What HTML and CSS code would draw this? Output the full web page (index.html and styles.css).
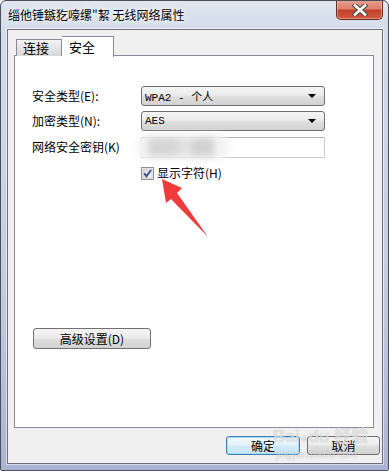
FILE: index.html
```html
<!DOCTYPE html>
<html lang="zh-CN">
  <head>
    <meta charset="utf-8">
    <title>无线网络属性</title>
    <link rel="stylesheet" href="styles.css">
  </head>
  <body>
    <div class="window">

      <div class="titlebar">
        <span class="title">缁他锤鏃犵嚎缧"絜 无线网络属性</span>
        <button class="close" aria-label="关闭">
          <svg width="16" height="12" viewBox="0 0 16 12">
            <path d="M3 1.5 L13 10.5 M13 1.5 L3 10.5" stroke="#4a4a4a" stroke-width="4.6" stroke-linecap="square"/>
            <path d="M3 1.5 L13 10.5 M13 1.5 L3 10.5" stroke="#fff" stroke-width="2.6" stroke-linecap="square"/>
          </svg>
        </button>
      </div>

      <div class="client">

        <div class="tabs">
          <div class="tab">连接</div>
          <div class="tab active">安全</div>
        </div>

        <div class="panel">
          <div class="fields">
            <label>安全类型(E):</label>
            <div class="combo"><span>WPA2 - 个人</span><i class="caret"></i></div>

            <label>加密类型(N):</label>
            <div class="combo"><span>AES</span><i class="caret"></i></div>

            <label>网络安全密钥(K)</label>
            <div class="textbox"></div>
          </div>

          <!-- key is hidden behind a blur in the original picture -->
          <div class="key-blur">
            <span class="b1"></span><span class="b2"></span><span class="b3"></span>
          </div>

          <div class="check-row">
            <svg class="checkbox" width="13" height="13" viewBox="0 0 13 13">
              <defs>
                <linearGradient id="cbg" x1="0" y1="0" x2="1" y2="1">
                  <stop offset="0" stop-color="#d6d6d6"/>
                  <stop offset="1" stop-color="#fbfbfb"/>
                </linearGradient>
              </defs>
              <rect x="0.5" y="0.5" width="12" height="12" fill="#f4f4f4" stroke="#8f8f8f"/>
              <rect x="2" y="2" width="9" height="9" fill="url(#cbg)" stroke="#b8b8b8" stroke-width="0.6"/>
              <path d="M3.2 6.4 L5.4 9.4 L10 3" fill="none" stroke="#3b4f8f" stroke-width="1.8"/>
            </svg>
            <span>显示字符(H)</span>
          </div>

          <button class="btn adv">高级设置(D)</button>
        </div>

        <div class="actions">
          <button class="btn default">确定</button>
          <button class="btn">取消</button>
        </div>

      </div>

      <div class="watermark">
        <div class="wm-main">Bai<span class="paw">●</span>du 经验</div>
        <div class="wm-url">jingyan.baidu.com</div>
      </div>

      <svg class="arrow" width="389" height="471" viewBox="0 0 389 471">
        <polygon points="162,179 182,188 177,193 208,237 171,199 166,203" fill="#f23a3a"/>
      </svg>

    </div>
  </body>
</html>
```

FILE: styles.css
```css
body {
  margin: 0;
  background: #fff;
  font-family: "Noto Sans CJK SC", "Liberation Sans", sans-serif;
  font-size: 12px;
  color: #000;
}

.window {
  position: relative;
  box-sizing: border-box;
  width: 389px;
  height: 471px;
  border: 1px solid #4b4f5a;
  border-radius: 6px 6px 2px 2px;
  background: linear-gradient(to bottom, #dfe6f0 0, #d3dcea 30px, #c3cde1 60%, #aab3d3 100%);
  overflow: hidden;
}

/* title bar */

.titlebar {
  display: flex;
  height: 28px;
}

.title {
  padding: 6px 0 0 7px;
  font-size: 12px;
  line-height: 16px;
  text-shadow: 0 0 6px #fff, 0 0 3px #fff;
}

.close {
  display: flex;
  align-items: center;
  justify-content: center;
  box-sizing: border-box;
  width: 47px;
  height: 20px;
  margin: -1px 5px 0 auto;
  padding: 0;
  border: 1px solid #6b2a22;
  border-top: none;
  border-radius: 0 0 5px 5px;
  background: linear-gradient(to bottom, #e8a294 0, #dc7e6a 45%, #c5402a 55%, #d25a40 100%);
  box-shadow: inset 0 0 0 1px rgba(255, 255, 255, 0.35);
}

/* client area */

.client {
  box-sizing: border-box;
  width: 376px;
  height: 435px;
  margin-left: 6px;
  padding: 6px 0 0 6px;
  border: 1px solid #6d7078;
  background: #f0f0f0;
  box-shadow: 0 0 0 1px rgba(255, 255, 255, 0.55);
}

.tabs {
  position: relative;
  z-index: 1;
  display: flex;
  align-items: flex-end;
  height: 20px;
  margin: 0 0 -1px 2px;
}

.tab {
  box-sizing: border-box;
  width: 46px;
  height: 17px;
  padding-left: 6px;
  border: 1px solid #898c95;
  border-bottom: none;
  background: linear-gradient(to bottom, #f3f3f3, #e4e4e4 50%, #d8d8d8);
  font-size: 13px;
  line-height: 16px;
}

.tab.active {
  width: 52px;
  height: 21px;
  margin-bottom: -1px;
  padding-left: 7px;
  border-left: none;
  background: #fff;
  line-height: 19px;
}

.panel {
  position: relative;
  box-sizing: border-box;
  width: 360px;
  height: 373px;
  padding: 30px 0 0 17px;
  border: 1px solid #898c95;
  background: #fff;
}

.fields {
  display: grid;
  grid-template-columns: 109px 184px;
  grid-template-rows: 20px 20px 21px;
  row-gap: 5px;
  align-items: center;
}

.fields label {
  line-height: 14px;
}

.combo {
  display: flex;
  align-items: center;
  justify-content: space-between;
  box-sizing: border-box;
  height: 20px;
  padding: 0 8px 0 3px;
  border: 1px solid #707070;
  border-radius: 3px;
  background: linear-gradient(to bottom, #f4f4f4 0, #ececec 45%, #dedede 55%, #d2d2d2 100%);
  font-family: "Liberation Mono", "Noto Sans CJK SC", monospace;
  font-size: 11px;
}

.caret {
  width: 0;
  height: 0;
  border-left: 4px solid transparent;
  border-right: 4px solid transparent;
  border-top: 4px solid #000;
}

.textbox {
  box-sizing: border-box;
  height: 21px;
  margin-top: 1px;
  border: 1px solid #c7cad1;
  border-top-color: #abadb3;
  border-radius: 2px;
  background: #fff;
}

.key-blur {
  position: absolute;
  left: 121px;
  top: 78px;
  display: flex;
  width: 94px;
  height: 26px;
  background: #f3f3f3;
  border-radius: 13px;
  filter: blur(3px);
}

.key-blur span {
  height: 18px;
  margin-top: 4px;
}

.key-blur .b1 { width: 30px; margin-left: 12px; background: #d6d6d6; }
.key-blur .b2 { width: 14px; background: #e2e2e2; }
.key-blur .b3 { width: 22px; background: #d2d2d2; }

.check-row {
  display: flex;
  align-items: center;
  gap: 3px;
  margin: 9px 0 0 109px;
  line-height: 14px;
}

/* buttons */

.btn {
  box-sizing: border-box;
  padding: 0;
  border: 1px solid #707070;
  border-radius: 3px;
  background: linear-gradient(to bottom, #f4f4f4 0, #ececec 45%, #dedede 55%, #d2d2d2 100%);
  font-family: "Noto Sans CJK SC", "Liberation Sans", sans-serif;
  font-size: 12px;
  color: #000;
}

.adv {
  display: block;
  width: 118px;
  height: 21px;
  margin: 148px 0 0 1px;
}

.actions {
  display: flex;
  gap: 7px;
  margin: 8px 0 0 212px;
}

.actions .btn {
  width: 74px;
  height: 19px;
  line-height: 15px;
}

.actions .btn + .btn {
  width: 73px;
}

.btn.default {
  border-color: #3c7fb1;
  background: linear-gradient(to bottom, #f2f9fd 0, #e6f3fb 45%, #d2eaf8 55%, #c4e3f6 100%);
  box-shadow: inset 0 0 0 1px #a8dcf6;
}

/* overlays from the screenshot */

.watermark {
  position: absolute;
  left: 272px;
  top: 426px;
  color: rgba(255, 255, 255, 0.55);
  text-shadow: 0 0 1px rgba(120, 120, 120, 0.45);
  pointer-events: none;
}

.wm-main {
  font-family: "Liberation Sans", "Noto Sans CJK SC", sans-serif;
  font-weight: bold;
  font-size: 17px;
  line-height: 20px;
}

.paw {
  font-size: 12px;
  margin: 0 1px;
}

.wm-url {
  margin: 1px 0 0 3px;
  font-family: "Liberation Sans", sans-serif;
  font-size: 10px;
  line-height: 11px;
}

.arrow {
  position: absolute;
  left: -1px;
  top: -1px;
  pointer-events: none;
}
```
